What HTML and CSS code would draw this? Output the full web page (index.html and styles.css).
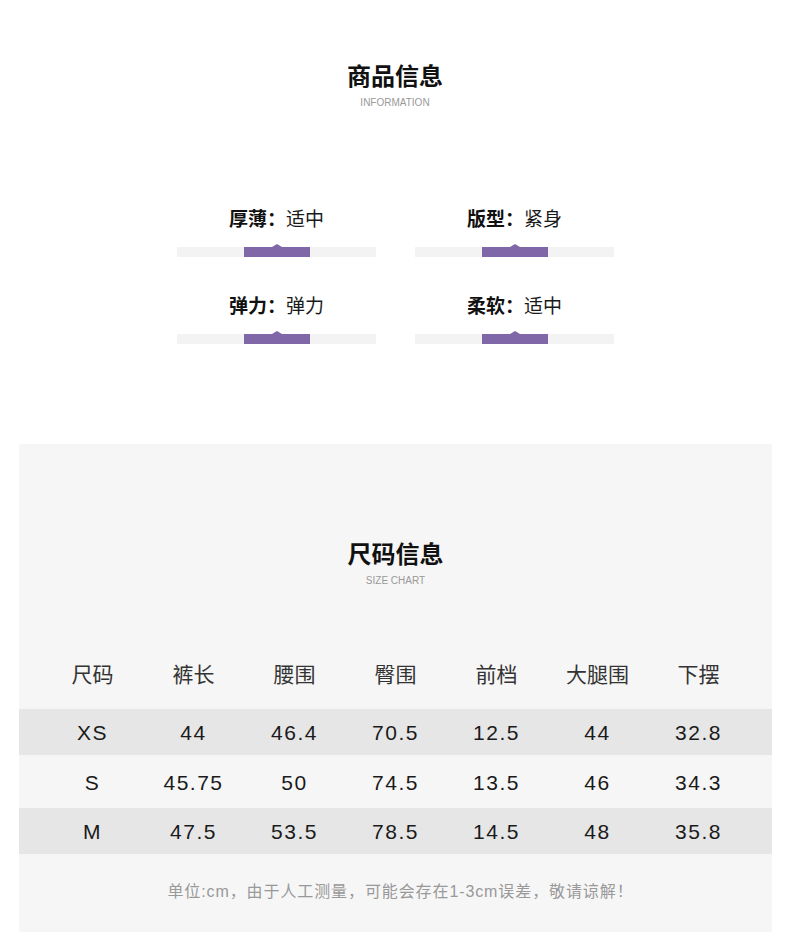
FILE: index.html
```html
<!DOCTYPE html>
<html lang="zh-CN">
<head>
<meta charset="utf-8">
<title>商品信息</title>
<link rel="stylesheet" href="styles.css">
</head>
<body>
<section class="info">
  <h2 class="title">商品信息</h2>
  <div class="subtitle">INFORMATION</div>
  <div class="attrs">
    <div class="attr">
      <div class="attr-label"><b>厚薄：</b>适中</div>
      <div class="bar"><span class="mark"></span></div>
    </div>
    <div class="attr">
      <div class="attr-label"><b>版型：</b>紧身</div>
      <div class="bar"><span class="mark"></span></div>
    </div>
    <div class="attr">
      <div class="attr-label"><b>弹力：</b>弹力</div>
      <div class="bar"><span class="mark"></span></div>
    </div>
    <div class="attr">
      <div class="attr-label"><b>柔软：</b>适中</div>
      <div class="bar"><span class="mark"></span></div>
    </div>
  </div>
</section>
<section class="panel">
  <h2 class="title">尺码信息</h2>
  <div class="subtitle">SIZE CHART</div>
  <div class="table">
    <div class="row head">
      <div>尺码</div><div>裤长</div><div>腰围</div><div>臀围</div><div>前档</div><div>大腿围</div><div>下摆</div>
    </div>
    <div class="row dark r1">
      <div>XS</div><div>44</div><div>46.4</div><div>70.5</div><div>12.5</div><div>44</div><div>32.8</div>
    </div>
    <div class="row r2">
      <div>S</div><div>45.75</div><div>50</div><div>74.5</div><div>13.5</div><div>46</div><div>34.3</div>
    </div>
    <div class="row dark r3">
      <div>M</div><div>47.5</div><div>53.5</div><div>78.5</div><div>14.5</div><div>48</div><div>35.8</div>
    </div>
  </div>
  <p class="note">单位:cm，由于人工测量，可能会存在1-3cm误差，敬请谅解！</p>
</section>
</body>
</html>
```
FILE: styles.css
```css
* { box-sizing: border-box; }
html, body { margin: 0; padding: 0; background: #fff; }
body {
  width: 790px;
  font-family: "Liberation Sans", "Noto Sans CJK SC", sans-serif;
  color: #111;
}
.info { padding-top: 60px; }
.title {
  margin: 0;
  text-align: center;
  font-family: "Noto Sans CJK SC", sans-serif;
  font-size: 24px;
  line-height: 30px;
  font-weight: 700;
  color: #111;
}
.subtitle {
  margin-top: 7px;
  text-align: center;
  font-size: 10px;
  line-height: 12px;
  color: #999;
}
.attrs {
  display: grid;
  grid-template-columns: 199px 199px;
  column-gap: 39px;
  row-gap: 36px;
  justify-content: center;
  margin: 97px 0 0 1px;
}
.attr-label {
  text-align: center;
  font-family: "Noto Sans CJK SC", sans-serif;
  font-size: 19px;
  line-height: 24px;
  color: #1a1a1a;
}
.attr-label b { font-weight: 700; color: #111; }
.bar {
  position: relative;
  margin-top: 17px;
  height: 10px;
  background: #f3f3f3;
}
.mark {
  position: absolute;
  left: 67px;
  top: 0;
  width: 66px;
  height: 10px;
  background: #8067a8;
}
.mark::before {
  content: "";
  position: absolute;
  left: 28px;
  top: -3px;
  border-left: 5px solid transparent;
  border-right: 5px solid transparent;
  border-bottom: 3px solid #8067a8;
}
.panel {
  margin: 100px 18px 0 19px;
  background: #f6f6f6;
  padding-top: 94px;
  padding-bottom: 40px;
}
.table { margin-top: 68px; }
.row {
  display: grid;
  grid-template-columns: repeat(7, 101px);
  justify-content: center;
  align-items: center;
  font-size: 21px;
  letter-spacing: 1.5px;
  color: #1a1a1a;
  padding-top: 2px;
}
.row > div { text-align: center; }
.row.head {
  height: 36px;
  margin-bottom: 18px;
  padding-top: 0;
  font-family: "Noto Sans CJK SC", sans-serif;
  font-size: 21px;
  letter-spacing: 0;
  color: #333;
}
.row.dark { background: #e6e6e6; }
.r1 { height: 46px; }
.r2 { height: 53px; }
.r3 { height: 46px; }
.note {
  margin: 28px 0 0;
  padding-left: 10px;
  text-align: center;
  font-size: 16px;
  line-height: 20px;
  color: #999;
  letter-spacing: 0.9px;
}
```
